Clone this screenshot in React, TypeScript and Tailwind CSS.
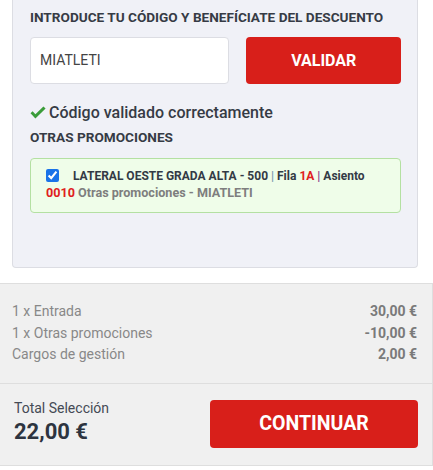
import React from "react";

export default function App() {
  return (
    <div className="w-[433px] h-[470px] bg-white overflow-hidden" style={{ fontFamily: "Roboto, 'Liberation Sans', sans-serif" }}>
      <div className="mx-[12px] w-[406px] h-[268px] bg-[#f0f1f7] border-x border-b border-[#dcdde3] rounded-b-[4px] pl-[17px] pr-[16px] pt-[8px]">
        <div className="text-[13.6px] leading-[18px] font-bold text-[#363b45]">
          INTRODUCE TU CÓDIGO Y BENEFÍCIATE DEL DESCUENTO
        </div>
        <div className="flex mt-[11px] gap-[17px]">
          <div className="w-[200px] h-[47px] bg-white border border-[#dcdde3] rounded-[4px] flex items-center pl-[9px] text-[14px] text-[#444]">
            MIATLETI
          </div>
          <button className="w-[155px] h-[47px] bg-[#d81f1a] rounded-[4px] text-white font-bold text-[16px]">
            VALIDAR
          </button>
        </div>
        <div className="flex items-center mt-[17px] h-[24px] text-[16px] font-medium text-[#363b45]">
          <svg width="16" height="14" viewBox="0 0 16 14" className="mr-[3px]">
            <path d="M0.5 7.2 L5.4 12.6 L15.6 2.4 L13.4 0.4 L5.4 8.2 L2.6 5.2 Z" fill="#3a9c3a" />
          </svg>
          Código validado correctamente
        </div>
        <div className="text-[13.6px] leading-[18px] font-bold text-[#363b45] mt-[3px]">
          OTRAS PROMOCIONES
        </div>
        <div className="mt-[12px] w-[371px] h-[55px] bg-[#effde9] border border-[#b4e0a2] rounded-[4px] pl-[15px] pt-[10px] text-[12px] leading-[15.5px] font-bold text-[#333a45]">
          <input type="checkbox" defaultChecked className="w-[13px] h-[13px] align-[-2px] mr-[14px] accent-[#1a73e8]" />
          LATERAL OESTE GRADA ALTA - 500 <span className="text-[#7a9cb0]">|</span> Fila <span className="text-[#e02020]">1A</span> <span className="text-[#8a3a8a]">|</span> Asiento
          <br />
          <span className="text-[12.6px]">
            <span className="text-[#e02020]">0010</span> <span className="text-[#7e7e7e]">Otras promociones - MIATLETI</span>
          </span>
        </div>
      </div>
      <div className="mt-[15px] w-[433px] bg-[#f0f0f0] border-t border-b border-r border-[#dedede]">
        <div className="pl-[12px] pr-[15px] pt-[17px] pb-[17px] text-[14px] leading-[21.7px]">
          <div className="flex justify-between">
            <span className="text-[#888]">1 x Entrada</span>
            <span className="font-bold text-[#7a7a7a]">30,00 €</span>
          </div>
          <div className="flex justify-between">
            <span className="text-[#888]">1 x Otras promociones</span>
            <span className="font-bold text-[#7a7a7a]">-10,00 €</span>
          </div>
          <div className="flex justify-between">
            <span className="text-[#888]">Cargos de gestión</span>
            <span className="font-bold text-[#7a7a7a]">2,00 €</span>
          </div>
        </div>
        <div className="border-t border-[#dedede] flex items-center justify-between pl-[14px] pr-[14px] h-[82px]">
          <div className="flex flex-col -mt-[6px]">
            <span className="text-[14px] leading-[20px] text-[#444a55]">Total Selección</span>
            <span className="text-[22px] leading-[28px] font-bold text-[#2d3440]">22,00 €</span>
          </div>
          <button className="w-[208px] h-[48px] bg-[#d81f1a] rounded-[4px] text-white font-bold text-[19.5px] -mt-[1px]">
            CONTINUAR
          </button>
        </div>
      </div>
    </div>
  );
}
